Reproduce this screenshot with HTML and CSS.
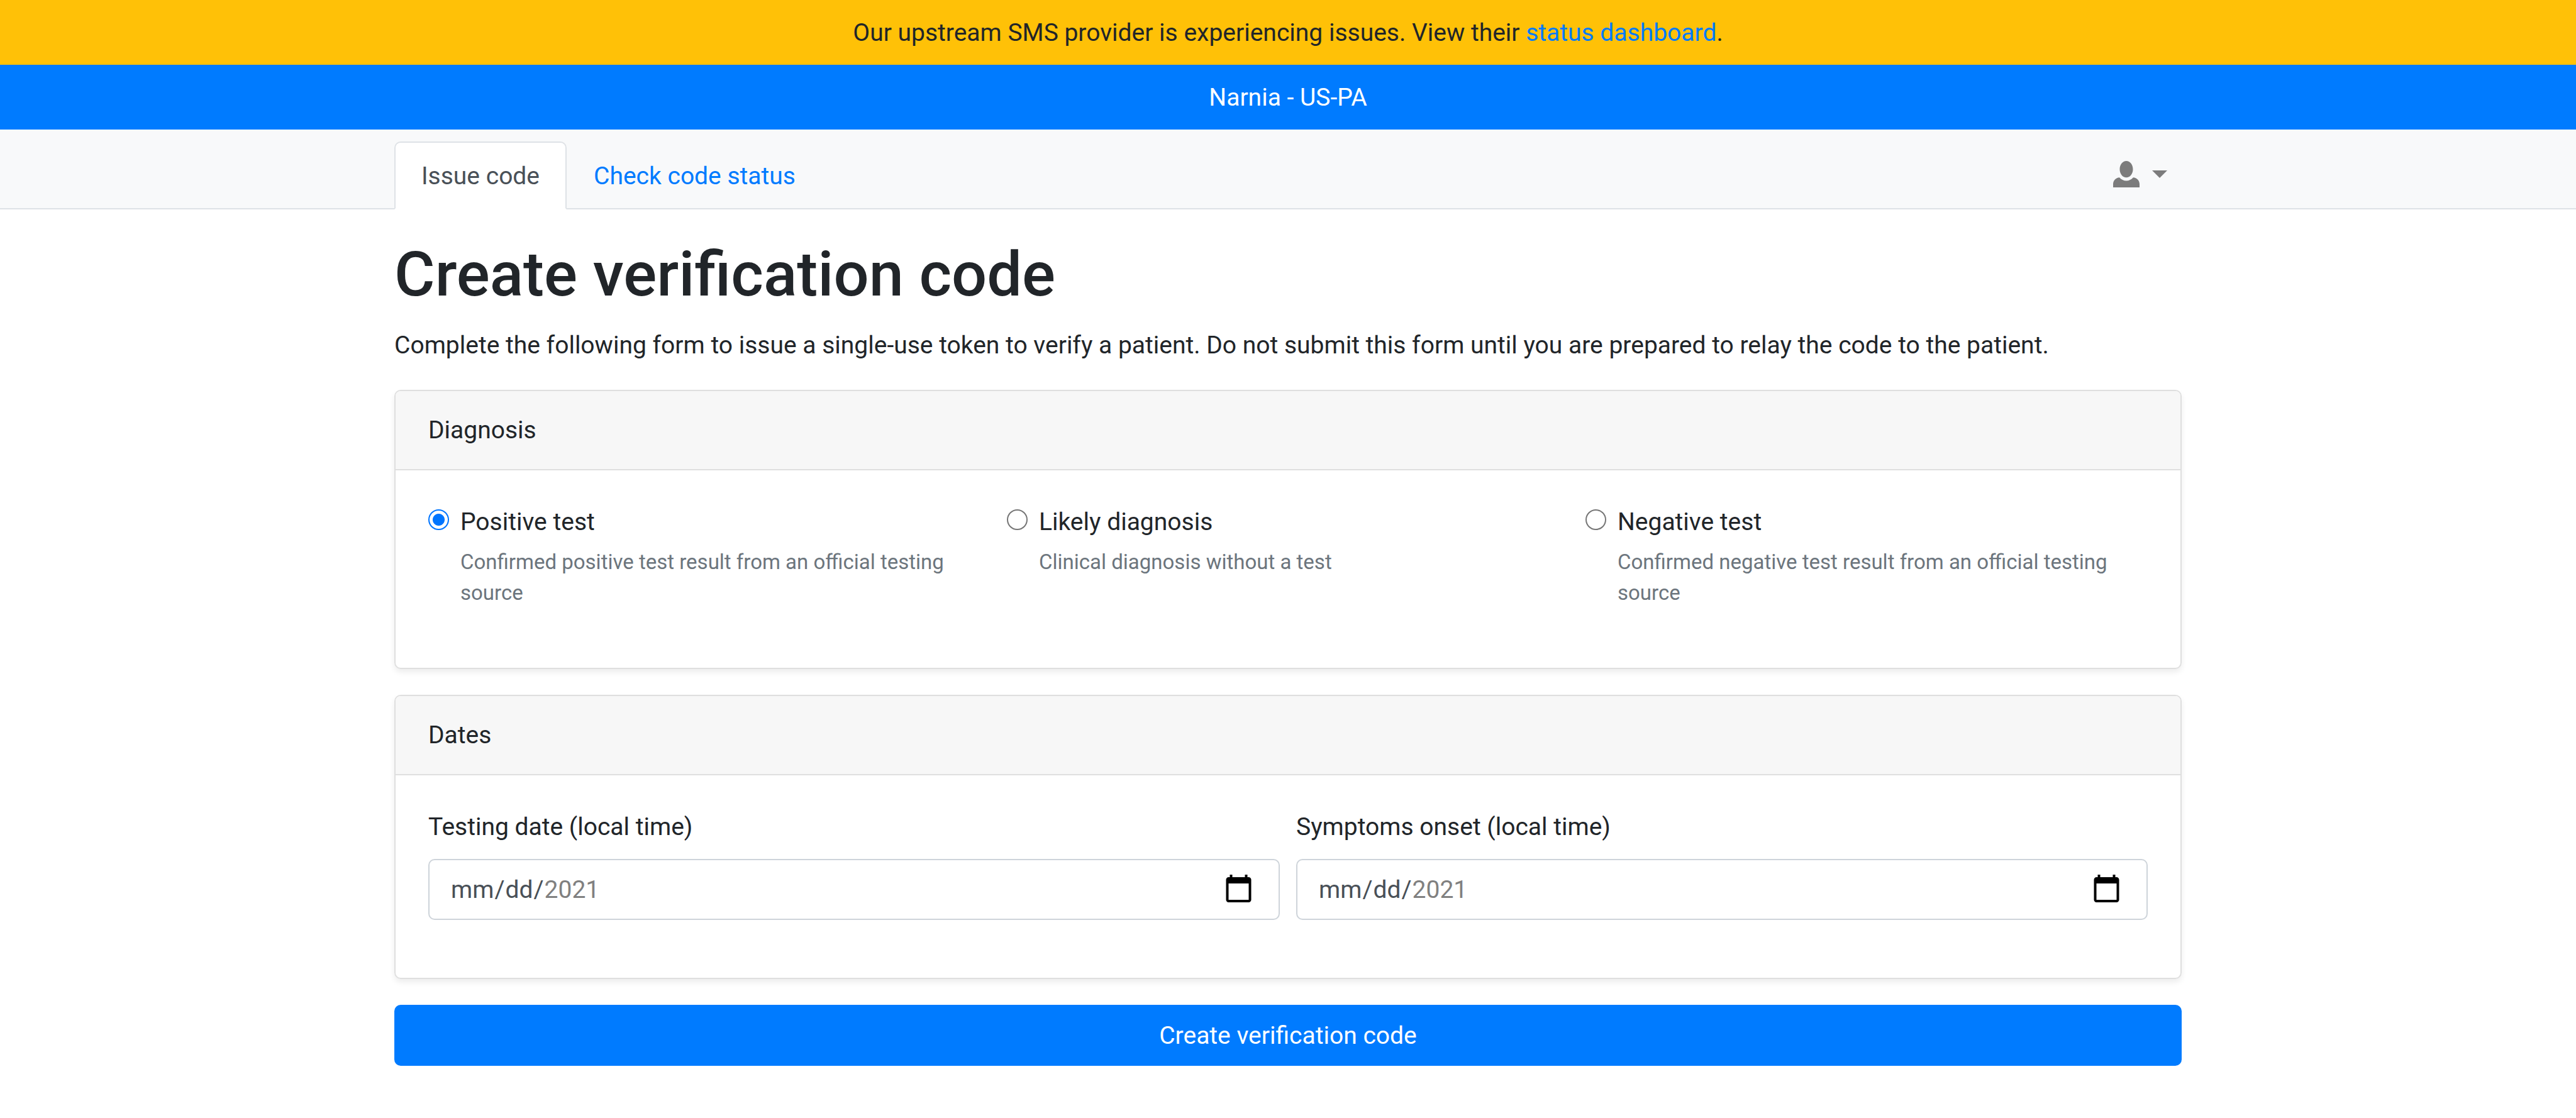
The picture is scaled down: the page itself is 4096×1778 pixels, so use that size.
FILE: index.html
```html
<!DOCTYPE html>
<html lang="en">
<head>
<meta charset="utf-8">
<title>Create verification code</title>
<link rel="stylesheet" href="styles.css">
</head>
<body>
<div class="banner banner-warning">Our upstream SMS provider is experiencing issues. View their <a href="#">status dashboard</a>.</div>
<div class="banner banner-realm">Narnia - US-PA</div>

<header class="topbar">
  <nav class="container tabs">
    <a class="tab tab-active" href="#">Issue code</a>
    <a class="tab" href="#">Check code status</a>
    <button class="account" type="button" aria-label="Account menu">
      <svg class="account-icon" viewBox="0 0 8 8" aria-hidden="true"><path d="M4 0c-1.1 0-2 1.12-2 2.5s.9 2.5 2 2.5 2-1.12 2-2.5-.9-2.5-2-2.5zm-2.09 5c-1.06.05-1.91.92-1.91 2v1h8v-1c0-1.08-.84-1.95-1.91-2-.54.61-1.28 1-2.09 1-.81 0-1.55-.39-2.09-1z"/></svg>
      <span class="caret"></span>
    </button>
  </nav>
</header>

<main class="container">
  <h1 class="title">Create verification code</h1>
  <p class="intro">Complete the following form to issue a single-use token to verify a patient. Do not submit this form until you are prepared to relay the code to the patient.</p>

  <form class="form">
    <section class="card">
      <h2 class="card-header">Diagnosis</h2>
      <div class="card-body row row-thirds">
        <div class="choice">
          <input class="radio" type="radio" name="test" id="confirmed" aria-describedby="confirmed-help" checked>
          <label for="confirmed">Positive test</label>
          <small class="help" id="confirmed-help">Confirmed positive test result from an official testing source</small>
        </div>
        <div class="choice">
          <input class="radio" type="radio" name="test" id="likely" aria-describedby="likely-help">
          <label for="likely">Likely diagnosis</label>
          <small class="help" id="likely-help">Clinical diagnosis without a test</small>
        </div>
        <div class="choice">
          <input class="radio" type="radio" name="test" id="negative" aria-describedby="negative-help">
          <label for="negative">Negative test</label>
          <small class="help" id="negative-help">Confirmed negative test result from an official testing source</small>
        </div>
      </div>
    </section>

    <section class="card">
      <h2 class="card-header">Dates</h2>
      <div class="card-body row row-halves">
        <div class="field">
          <label for="test-date">Testing date (local time)</label>
          <input class="date" type="date" id="test-date" min="2021-01-01" max="2021-12-31">
        </div>
        <div class="field">
          <label for="symptom-date">Symptoms onset (local time)</label>
          <input class="date" type="date" id="symptom-date" min="2021-01-01" max="2021-12-31">
        </div>
      </div>
    </section>

    <button class="submit" type="submit">Create verification code</button>
  </form>
</main>
</body>
</html>
```

FILE: styles.css
```css
*,
*::before,
*::after {
  box-sizing: border-box;
}

body {
  margin: 0;
  background: #fff;
  color: #212529;
  font-family: Roboto, "Liberation Sans", sans-serif;
  font-size: 39px;
  line-height: 62px;
}

a {
  color: #007bff;
  text-decoration: none;
}

.container {
  width: 100%;
  max-width: 2842px;
  margin: 0 auto;
}

.banner {
  padding: 21px 20px 20px;
  text-align: center;
}

.banner-warning {
  background: #ffc107;
}

.banner-realm {
  background: #007bff;
  color: #fff;
}

.topbar {
  padding-top: 19px;
  background: #f8f9fa;
  box-shadow: inset 0 -2px #dee2e6;
}

.tabs {
  display: flex;
}

.tab {
  padding: 22px 41px 20px;
  border: 2px solid transparent;
  border-radius: 10px 10px 0 0;
}

.tab-active {
  border-color: #dee2e6 #dee2e6 #fff;
  background: #fff;
  color: #495057;
}

.account {
  display: flex;
  align-items: center;
  gap: 20px;
  margin-left: auto;
  padding: 0 23px 5px;
  border: 0;
  background: none;
  color: #7c7c7c;
}

.account-icon {
  width: 42px;
  height: 42px;
  fill: currentColor;
}

.caret {
  border: 12px solid transparent;
  border-top-color: currentColor;
  border-bottom: 0;
}

.title {
  margin: 42px 0 20px;
  font-size: 99px;
  font-weight: 500;
  line-height: 123px;
}

.intro {
  margin: 0 0 40px;
}

.form {
  display: flex;
  flex-direction: column;
  gap: 41px;
}

.card {
  border: 2px solid #dfdfdf;
  border-radius: 10px;
  box-shadow: 0 5px 10px rgba(0, 0, 0, 0.075);
}

.card-header {
  margin: 0;
  padding: 31px 52px;
  border-bottom: 2px solid #dfdfdf;
  border-radius: 8px 8px 0 0;
  background: #f7f7f7;
  font-size: inherit;
  font-weight: 400;
}

.card-body {
  padding: 51px 52px 92px;
}

.row {
  display: grid;
  column-gap: 26px;
}

.row-thirds {
  grid-template-columns: repeat(3, 1fr);
}

.row-halves {
  grid-template-columns: repeat(2, 1fr);
}

.choice {
  display: grid;
  grid-template-columns: 33px 1fr;
  column-gap: 18px;
  row-gap: 8px;
  align-content: start;
}

.radio {
  width: 33px;
  height: 33px;
  margin: 11px 0 0;
  appearance: none;
  border: 2px solid #767676;
  border-radius: 50%;
  background: #fff;
}

.radio:checked {
  border-color: #0075ff;
  background: radial-gradient(circle, #0075ff 9px, #fff 10px);
}

.help {
  grid-column: 2;
  padding-bottom: 3px;
  color: #6c757d;
  font-size: 33px;
  line-height: 49px;
}

.field {
  display: flex;
  flex-direction: column;
  gap: 20px;
}

.date {
  width: 100%;
  height: 97px;
  padding: 16px 33px;
  border: 2px solid #ced4da;
  border-radius: 10px;
  background: #fff;
  color: #495057;
  font: inherit;
}

.date::-webkit-calendar-picker-indicator {
  width: 51px;
  height: 51px;
  margin-right: 5px;
  padding: 0;
}

.submit {
  height: 97px;
  padding: 16px 33px;
  border: 0;
  border-radius: 10px;
  background: #007bff;
  color: #fff;
  font: inherit;
}
```
